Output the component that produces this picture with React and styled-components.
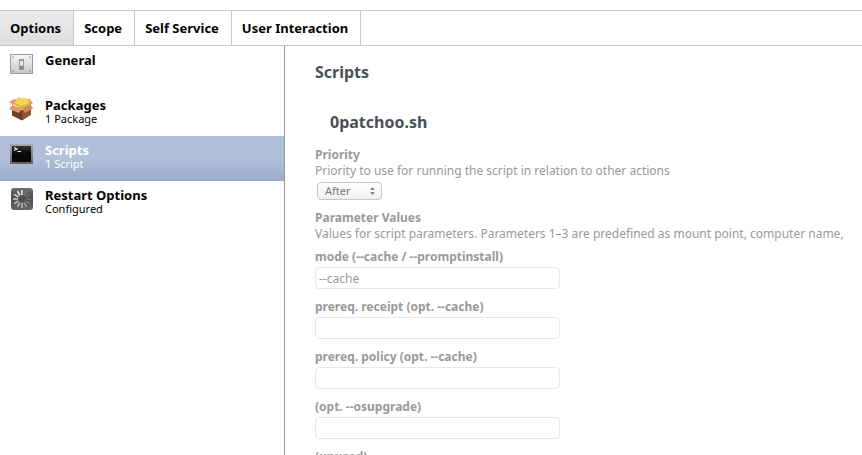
import React from "react";
import styled, { createGlobalStyle } from "styled-components";

const GlobalStyle = createGlobalStyle`
  * { box-sizing: border-box; }
  body {
    margin: 0;
    background: #fff;
    color: #000;
    font-family: "Noto Sans", "Open Sans", sans-serif;
    font-size: 12px;
  }
`;

const Page = styled.div`
  height: 100vh;
  overflow: hidden;
  display: flex;
  flex-direction: column;
  padding-top: 10px;
`;

const TabBar = styled.nav`
  display: flex;
  flex: none;
  border-top: 1px solid #c8c8c8;
  border-bottom: 1px solid #c8c8c8;
`;

const Tab = styled.button`
  height: 34px;
  padding: 0 12px 0 10px;
  border: 0;
  border-right: 1px solid #c8c8c8;
  background: ${(p) => (p.$active ? "linear-gradient(#ececec, #dedede)" : "#fff")};
  color: #000;
  font: bold 13px/34px "Noto Sans", "Open Sans", sans-serif;
  white-space: nowrap;
`;

const Body = styled.div`
  display: flex;
  flex: 1;
  min-height: 0;
`;

const Sidebar = styled.aside`
  flex: 0 0 285px;
  border-right: 1px solid #999;
`;

const Item = styled.button`
  display: flex;
  gap: 12px;
  width: 100%;
  height: 45px;
  padding: 6px 9px;
  border: 0;
  text-align: left;
  font-family: inherit;
  color: ${(p) => (p.$active ? "#fff" : "#000")};
  background: ${(p) =>
    p.$active ? "linear-gradient(#b1c0d9, #b1bfd8 50%, #9aaaca)" : "transparent"};

  svg {
    flex: none;
  }
`;

const ItemText = styled.span`
  display: flex;
  flex-direction: column;
`;

const ItemTitle = styled.span`
  font-size: 13px;
  font-weight: bold;
  line-height: 16px;
`;

const ItemDetail = styled.span`
  font-size: 11px;
  line-height: 12px;
`;

const Content = styled.main`
  flex: 1;
  min-width: 0;
  padding: 16px 0 0 30px;
  color: #999;
  overflow: hidden;
`;

const Heading = styled.h1`
  margin: 0;
  font-size: 16px;
  line-height: 20px;
  color: #4a4f57;
`;

const ScriptName = styled.h2`
  margin: 30px 0 15px;
  padding-left: 15px;
  font-size: 16px;
  line-height: 20px;
  color: #4a4f57;
`;

const Section = styled.section`
  margin-bottom: 7px;
`;

const Label = styled.label`
  display: block;
  font-weight: bold;
  line-height: 16px;
  white-space: nowrap;
`;

const SectionTitle = styled.h3`
  margin: 0;
  font-size: 12px;
  line-height: 16px;
`;

const Description = styled.p`
  margin: 0;
  line-height: 16px;
  white-space: nowrap;
`;

const SelectBox = styled.div`
  display: flex;
  align-items: center;
  position: relative;
  width: 65px;
  height: 18px;
  margin: 3px 2px 10px;

  svg {
    position: absolute;
    right: 7px;
    pointer-events: none;
  }
`;

const Select = styled.select`
  appearance: none;
  width: 100%;
  height: 100%;
  padding: 0 16px 0 7px;
  border: 1px solid #c6c6c6;
  border-radius: 4px;
  background: linear-gradient(#fff, #f1f1f1);
  color: #777;
  font: 11px/16px "Noto Sans", "Open Sans", sans-serif;
`;

const Field = styled.div`
  height: 50px;
`;

const TextInput = styled.input`
  display: block;
  width: 245px;
  height: 22px;
  margin-top: 2px;
  padding: 0 3px;
  border: 1px solid #e8e8e8;
  border-radius: 4px;
  background: #fff;
  color: #999;
  font: 12px "Noto Sans", "Open Sans", sans-serif;
`;

function SwitchIcon() {
  return (
    <svg width="24" height="24" viewBox="0 0 24 24" aria-hidden="true">
      <defs>
        <linearGradient id="plate" x2="0" y2="1">
          <stop stopColor="#f8f8f8" />
          <stop offset="1" stopColor="#c8c8ca" />
        </linearGradient>
        <linearGradient id="lever" x2="0" y2="1">
          <stop stopColor="#888" />
          <stop offset=".4" stopColor="#ddd" />
          <stop offset="1" stopColor="#999" />
        </linearGradient>
      </defs>
      <rect x="1.5" y="2.5" width="22" height="19" fill="url(#plate)" stroke="#989b9e" />
      <g fill="#707070">
        <circle cx="4" cy="5" r=".7" />
        <circle cx="21" cy="5" r=".7" />
        <circle cx="4" cy="19" r=".7" />
        <circle cx="21" cy="19" r=".7" />
      </g>
      <rect x="10.5" y="7.5" width="4" height="10" fill="url(#lever)" stroke="#999" />
      <path d="M11.5 9h2v4h-2z" fill="#f8f8f8" />
      <path d="M11 14h3v3h-3z" fill="#858585" />
    </svg>
  );
}

function BoxIcon() {
  return (
    <svg width="24" height="24" viewBox="0 0 24 24" aria-hidden="true">
      <path d="M3 9l10 4v10.500L3 18.500z" fill="#6f3d1f" />
      <path d="M13 13l9-4v9l-9 5.500z" fill="#8d552e" />
      <path d="M0 5L5 2l3 1-4 5z" fill="#dc9d72" />
      <path d="M16 1.500l4.500.5L24 6l-3 2z" fill="#dc9d72" />
      <path d="M4 7L9 .5 20 2.500 21.500 8 13 12z" fill="#dcb73a" />
      <path d="M5.500 6L9.500.5 19.500 2.500 20 6l-8 3z" fill="#efd455" />
      <path d="M3.500 8l9.500 3.500-3 4.500-10-4z" fill="#dc9b70" />
      <path d="M21.500 7.500l-8.500 4 3 4.500 8-4.500z" fill="#cd8a60" />
    </svg>
  );
}

function TerminalIcon() {
  return (
    <svg width="24" height="24" viewBox="0 0 24 24" aria-hidden="true">
      <defs>
        <linearGradient id="frame" x2="0" y2="1">
          <stop stopColor="#aaa" />
          <stop offset="1" stopColor="#606060" />
        </linearGradient>
        <linearGradient id="screen" x2="0" y2="1">
          <stop stopColor="#333" />
          <stop offset=".5" stopColor="#151515" />
          <stop offset="1" stopColor="#000" />
        </linearGradient>
      </defs>
      <rect x="1" y="2" width="23" height="20" fill="url(#frame)" />
      <rect x="3" y="4" width="19" height="16" fill="#080808" />
      <path d="M3 4h19v6L3 15z" fill="url(#screen)" />
      <path d="M5 5.5l3 1.500-3 1.500M8.500 9.500H12" fill="none" stroke="#f2f2f2" strokeWidth="1.1" />
    </svg>
  );
}

const SPOKES = [0.85, 0.15, 0.15, 0.18, 0.22, 0.4, 0.5, 0.55, 0.6, 0.65, 0.7, 0.8];

function SpinnerIcon() {
  return (
    <svg width="24" height="24" viewBox="0 0 24 24" aria-hidden="true">
      <defs>
        <linearGradient id="tile" x2="0" y2="1">
          <stop stopColor="#707070" />
          <stop offset=".45" stopColor="#4c4c4c" />
          <stop offset="1" stopColor="#666" />
        </linearGradient>
      </defs>
      <rect x="2" y="1" width="22" height="22" rx="3" fill="url(#tile)" />
      <g stroke="#fff" strokeWidth="1.7">
        {SPOKES.map((opacity, i) => (
          <path key={i} d="M13 8V3" opacity={opacity} transform={`rotate(${i * 30} 13 12)`} />
        ))}
      </g>
    </svg>
  );
}

const TABS = ["Options", "Scope", "Self Service", "User Interaction"];

const ITEMS = [
  { title: "General", Icon: SwitchIcon },
  { title: "Packages", detail: "1 Package", Icon: BoxIcon },
  { title: "Scripts", detail: "1 Script", Icon: TerminalIcon },
  { title: "Restart Options", detail: "Configured", Icon: SpinnerIcon },
];

const PARAMETERS = [
  { id: "p4", label: "mode (--cache / --promptinstall)", value: "--cache" },
  { id: "p5", label: "prereq. receipt (opt. --cache)", value: "" },
  { id: "p6", label: "prereq. policy (opt. --cache)", value: "" },
  { id: "p7", label: "(opt. --osupgrade)", value: "" },
  { id: "p8", label: "(unused)", value: "" },
];

export default function App() {
  return (
    <Page>
      <GlobalStyle />
      <TabBar>
        {TABS.map((name, i) => (
          <Tab key={name} type="button" $active={i === 0}>
            {name}
          </Tab>
        ))}
      </TabBar>
      <Body>
        <Sidebar>
          {ITEMS.map(({ title, detail, Icon }) => (
            <Item key={title} type="button" $active={title === "Scripts"}>
              <Icon />
              <ItemText>
                <ItemTitle>{title}</ItemTitle>
                {detail && <ItemDetail>{detail}</ItemDetail>}
              </ItemText>
            </Item>
          ))}
        </Sidebar>
        <Content>
          <Heading>Scripts</Heading>
          <ScriptName>0patchoo.sh</ScriptName>
          <Section>
            <Label htmlFor="priority">Priority</Label>
            <Description>Priority to use for running the script in relation to other actions</Description>
            <SelectBox>
              <Select id="priority" defaultValue="After">
                <option>Before</option>
                <option>After</option>
              </Select>
              <svg width="5" height="8" viewBox="0 0 5 8" aria-hidden="true">
                <path d="M0 3L2.500 0 5 3zM0 5L2.500 8 5 5z" fill="#8a8a8a" />
              </svg>
            </SelectBox>
          </Section>
          <Section>
            <SectionTitle>Parameter Values</SectionTitle>
            <Description>
              Values for script parameters. Parameters 1–3 are predefined as mount point, computer name,
            </Description>
          </Section>
          {PARAMETERS.map(({ id, label, value }) => (
            <Field key={id}>
              <Label htmlFor={id}>{label}</Label>
              <TextInput id={id} type="text" defaultValue={value} />
            </Field>
          ))}
        </Content>
      </Body>
    </Page>
  );
}
